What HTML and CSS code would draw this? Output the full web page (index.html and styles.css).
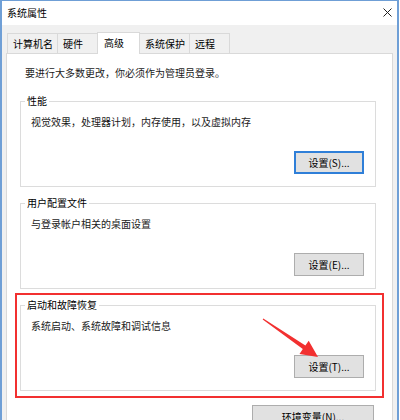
FILE: index.html
```html
<!DOCTYPE html>
<html lang="zh-CN">
<head>
<meta charset="utf-8">
<title>系统属性</title>
<link rel="stylesheet" href="styles.css">
</head>
<body>
<div class="window">
  <div class="titlebar">
    <span class="title">系统属性</span>
    <svg class="close" width="9" height="9" viewBox="0 0 9 9"><path d="M0.5 0.5 L8.5 8.5 M8.5 0.5 L0.5 8.5" stroke="#222" stroke-width="1" fill="none"/></svg>
  </div>
  <div class="body">
    <div class="tabs">
      <div class="tab">计算机名</div>
      <div class="tab">硬件</div>
      <div class="tab active">高级</div>
      <div class="tab">系统保护</div>
      <div class="tab">远程</div>
    </div>
    <div class="panel">
      <p class="intro">要进行大多数更改，你必须作为管理员登录。</p>
      <fieldset class="group">
        <legend>性能</legend>
        <p class="desc">视觉效果，处理器计划，内存使用，以及虚拟内存</p>
        <button class="btn default">设置(S)...</button>
      </fieldset>
      <fieldset class="group next">
        <legend>用户配置文件</legend>
        <p class="desc">与登录帐户相关的桌面设置</p>
        <button class="btn">设置(E)...</button>
      </fieldset>
      <div class="highlight next">
        <fieldset class="group">
          <legend>启动和故障恢复</legend>
          <p class="desc">系统启动、系统故障和调试信息</p>
          <button class="btn">设置(T)...</button>
        </fieldset>
      </div>
      <button class="btn wide">环境变量(N)...</button>
    </div>
  </div>
  <svg class="arrow" width="400" height="420" viewBox="0 0 400 420">
    <polygon fill="#f23030" points="263.3,318.6 305.4,345.5 308.7,340.7 318,357 299.5,353.9 302.8,349.1 262.7,319.4"/>
  </svg>
</div>
</body>
</html>
```
FILE: styles.css
```css
* { box-sizing: border-box; }
html, body {
  margin: 0;
  padding: 0;
  width: 400px;
  height: 420px;
  overflow: hidden;
  background: #fff;
}
body {
  font-family: "Noto Sans CJK SC", "Noto Sans", sans-serif;
  font-size: 10px;
  color: #1a1a1a;
}
.window {
  position: relative;
  width: 399px;
  height: 440px;
  border-top: 1px solid #6f9fd6;
  border-left: 2px solid #6f9fd6;
  border-right: 2px solid #6f9fd6;
  background: #f0f0f0;
  display: flex;
  flex-direction: column;
}
.titlebar {
  height: 24px;
  background: #fff;
  display: flex;
  align-items: center;
  justify-content: space-between;
  padding: 0 5px 1px 5px;
}
.title {
  line-height: 14px;
  color: #000;
}
.close { display: block; }
.body {
  flex: 1;
  padding: 7px 4px 0 4px;
  display: flex;
  flex-direction: column;
}
.tabs {
  display: flex;
  align-items: flex-end;
  padding-left: 1px;
}
.tab {
  height: 20px;
  min-width: 41px;
  padding: 0 4px 0 5px;
  line-height: 19px;
  border: 1px solid #d9d9d9;
  border-bottom: none;
  background: #f0f0f0;
  white-space: nowrap;
  color: #000;
}
.tab + .tab { margin-left: -1px; }
.tab.active {
  position: relative;
  z-index: 1;
  height: 22px;
  min-width: 43px;
  padding-left: 6px;
  line-height: 20px;
  margin-bottom: -1px;
  background: #fff;
}
.panel {
  flex: 1;
  background: #fff;
  border: 1px solid #d9d9d9;
  padding: 12px 16px 0 13px;
}
.intro {
  margin: 0 0 14px 0;
  padding-left: 5px;
  line-height: 14px;
}
.group {
  margin: 0;
  padding: 0 11px 12px 10px;
  border: 1px solid #dcdcdc;
  min-width: 0;
}
.group.next, .highlight.next { margin-top: 9px; }
.highlight .group { margin-top: 0; }
.group legend {
  margin-left: -6px;
  padding: 0 2px;
  line-height: 14px;
  color: #000;
}
.desc {
  margin: 7px 0 0 0;
  line-height: 14px;
}
.btn {
  display: block;
  margin: 22px 0 0 auto;
  width: 70px;
  height: 23px;
  padding: 0;
  background: #e1e1e1;
  border: 1px solid #adadad;
  font-family: inherit;
  font-size: 10px;
  color: #000;
  line-height: 21px;
}
.btn.default {
  border-color: #2f7fd8;
  box-shadow: inset 0 0 0 1px #2f7fd8;
}
.highlight {
  position: relative;
}
.highlight::after {
  content: "";
  position: absolute;
  left: -5px;
  top: -5px;
  right: -8px;
  bottom: -7px;
  border: 2px solid #f23030;
}
.btn.wide {
  width: 122px;
  margin: 14px 2px 0 auto;
}
.arrow {
  position: absolute;
  left: -2px;
  top: -1px;
  pointer-events: none;
}
```
